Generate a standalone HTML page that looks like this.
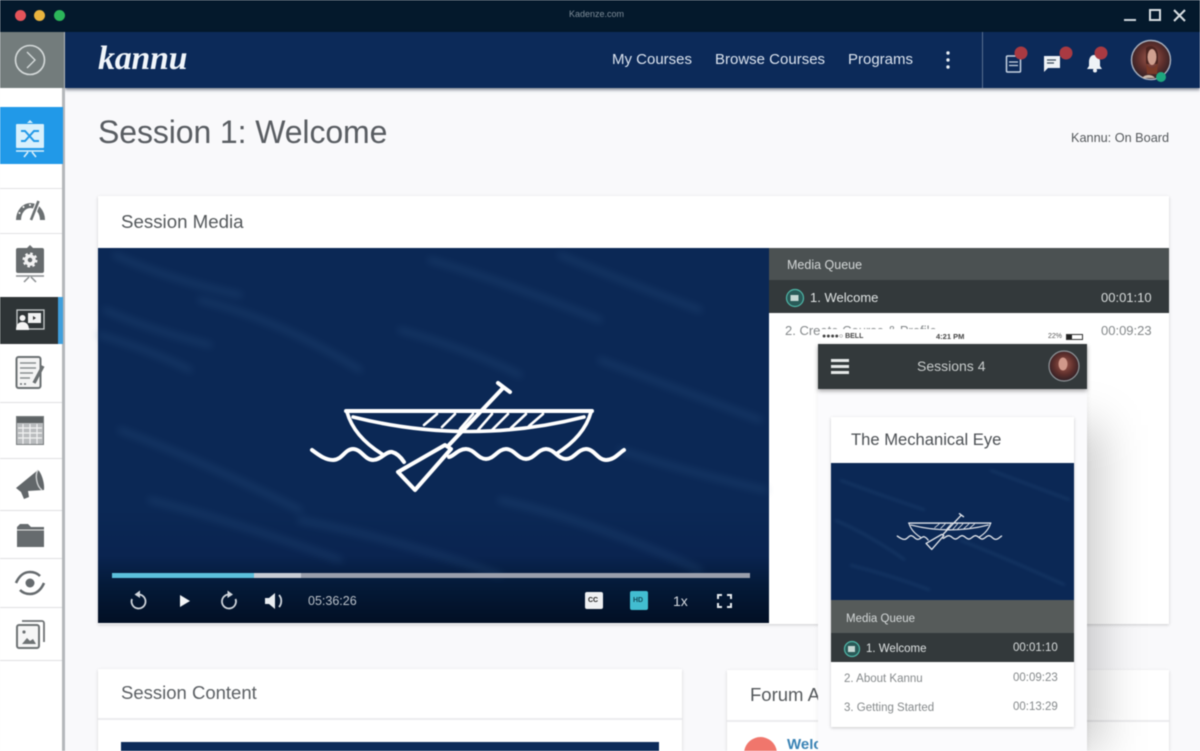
<!DOCTYPE html>
<html><head><meta charset="utf-8"><title>Kannu</title>
<style>
html,body{margin:0;padding:0;background:#f9f9fb;width:1200px;height:751px;overflow:hidden}
#p{position:relative;width:1200px;height:751px;overflow:hidden;background:#f9f9fb;font-family:"Liberation Sans",sans-serif;filter:blur(.6px)}
#p div{position:absolute;box-sizing:border-box}
#p div.t{position:absolute;white-space:nowrap;line-height:1}
svg{position:absolute;left:0;top:0}
</style></head><body>
<div id="p">
<div style="left:0;top:0;width:1200px;height:32px;background:#04192c"></div>
<div style="left:65px;top:32px;width:1135px;height:56px;background:#0c2a59;box-shadow:0 2px 3px rgba(40,50,70,.55)"></div>
<div style="left:982px;top:32px;width:1px;height:56px;background:#5a7090"></div>
<div class="t" style="left:569px;top:10px;font-size:9px;color:#7e8c98">Kadenze.com</div>
<div style="left:15px;top:10px;width:11px;height:11px;border-radius:50%;background:#e4545a"></div>
<div style="left:34px;top:10px;width:11px;height:11px;border-radius:50%;background:#e9b43e"></div>
<div style="left:54px;top:10px;width:11px;height:11px;border-radius:50%;background:#2cb65a"></div>

<div class="t" style="left:98px;top:42px;font-family:'Liberation Serif',serif;font-style:italic;font-weight:bold;font-size:34px;color:#f0f5fa;letter-spacing:-.3px">kannu</div>
<div class="t" style="left:612px;top:52px;font-size:15px;color:#dbe3ee">My Courses</div>
<div class="t" style="left:715px;top:52px;font-size:15px;color:#dbe3ee">Browse Courses</div>
<div class="t" style="left:848px;top:52px;font-size:15px;color:#dbe3ee">Programs</div>

<!-- sidebar -->
<div style="left:0;top:88px;width:62px;height:663px;background:#fff"></div>
<div style="left:62px;top:32px;width:3px;height:719px;background:#b4b7ba"></div>
<div style="left:0;top:32px;width:64px;height:56px;background:#737c7c"></div>
<div style="left:0;top:107px;width:63px;height:57px;background:#2199e8"></div>
<div style="left:0;top:188px;width:62px;height:1px;background:#e2e2e4"></div>
<div style="left:0;top:233px;width:62px;height:1px;background:#e2e2e4"></div>
<div style="left:0;top:297px;width:59px;height:47px;background:#2e3436"></div>
<div style="left:58px;top:297px;width:5px;height:47px;background:#3f9fdc"></div>
<div style="left:0;top:402px;width:62px;height:1px;background:#e0e0e2"></div>
<div style="left:0;top:458px;width:62px;height:1px;background:#e0e0e2"></div>
<div style="left:0;top:510px;width:62px;height:1px;background:#e0e0e2"></div>
<div style="left:0;top:558px;width:62px;height:1px;background:#e0e0e2"></div>
<div style="left:0;top:607px;width:62px;height:1px;background:#e0e0e2"></div>
<div style="left:0;top:660px;width:62px;height:1px;background:#e0e0e2"></div>

<!-- title -->
<div class="t" style="left:98px;top:116px;font-size:32px;color:#595d62;letter-spacing:-.1px">Session 1: Welcome</div>
<div class="t" style="left:1071px;top:132px;font-size:12.7px;color:#55595c">Kannu: On Board</div>

<!-- main card -->
<div style="left:98px;top:196px;width:1071px;height:428px;background:#fff;box-shadow:0 1px 3px rgba(0,0,0,.18)"></div>
<div class="t" style="left:121px;top:213px;font-size:18.7px;color:#55595c">Session Media</div>
<div style="left:98px;top:248px;width:671px;height:375px;background:linear-gradient(180deg,#0b2855 0,#0b2855 70%,#0a2450 82%,#041a38 90%,#020f24 100%)"></div>
<svg width="1200" height="751" style="filter:blur(4px);opacity:.32">
<g stroke="#35608f" stroke-width="5" fill="none" stroke-linecap="round">
<path d="M115 255Q170 280 240 295"/><path d="M105 310Q150 330 210 345"/><path d="M100 335Q150 350 190 370"/><path d="M200 300Q280 320 360 370"/><path d="M430 260Q500 280 600 320"/><path d="M560 255Q620 280 700 310"/><path d="M400 330Q470 350 520 375"/><path d="M600 360Q680 390 760 420"/><path d="M120 430Q200 460 300 510"/><path d="M150 500Q230 520 340 560"/><path d="M500 500Q590 520 700 570"/><path d="M620 450Q680 470 765 490"/><path d="M300 520Q400 540 500 575"/>
</g></svg>
<!-- queue -->
<div style="left:769px;top:248px;width:400px;height:32px;background:#4b5152"></div>
<div style="left:769px;top:280px;width:400px;height:33px;background:#33393b"></div>
<div class="t" style="left:787px;top:259px;font-size:12.5px;color:#d4d8d8">Media Queue</div>
<div class="t" style="left:810px;top:291px;font-size:13px;color:#dfe3e3">1. Welcome</div>
<div class="t" style="left:1101px;top:291px;font-size:13px;color:#d8dcdc">00:01:10</div>
<div class="t" style="left:785px;top:324px;font-size:13px;color:#85898b">2. Create Course &amp; Profile</div>
<div class="t" style="left:1101px;top:324px;font-size:13px;color:#85898b">00:09:23</div>

<!-- player -->
<div style="left:112px;top:573px;width:638px;height:5px;background:#9a9fac"></div>
<div style="left:112px;top:573px;width:189px;height:5px;background:#c8ccd4"></div>
<div style="left:112px;top:573px;width:142px;height:5px;background:#5cc0dc"></div>
<div class="t" style="left:308px;top:595px;font-size:12.5px;color:#b9c0c8">05:36:26</div>
<div style="left:585px;top:592px;width:18px;height:17px;background:#eef0f2;border-radius:2px"></div>
<div class="t" style="left:588px;top:597px;font-size:7px;font-weight:bold;color:#222">CC</div>
<div style="left:630px;top:591px;width:18px;height:19px;background:#42bdd0;border-radius:2px"></div>
<div class="t" style="left:633px;top:597px;font-size:7px;font-weight:bold;color:#14505e">HD</div>
<div class="t" style="left:673px;top:594px;font-size:14px;color:#d5dae0">1x</div>

<!-- bottom cards -->
<div style="left:98px;top:669px;width:584px;height:82px;background:#fff;box-shadow:0 1px 3px rgba(0,0,0,.16)"></div>
<div style="left:98px;top:718px;width:584px;height:2px;background:#ececee"></div>
<div class="t" style="left:121px;top:684px;font-size:18.5px;color:#5c6064">Session Content</div>
<div style="left:121px;top:742px;width:538px;height:9px;background:#0d2b59"></div>
<div style="left:727px;top:670px;width:442px;height:81px;background:#fff;box-shadow:0 1px 3px rgba(0,0,0,.16)"></div>
<div style="left:727px;top:720px;width:442px;height:2px;background:#ececee"></div>
<div class="t" style="left:750px;top:686px;font-size:18.5px;color:#55595c">Forum Activity</div>
<div class="t" style="left:787px;top:739px;height:12px;font-size:15px;line-height:12px;font-weight:bold;color:#3a83b5;overflow:hidden">Welcome</div>
<svg width="1200" height="751"><path d="M744.200 751A16.500 16.500 0 0 1 776.800 751Z" fill="#f0766c"/></svg>

<!-- phone -->
<svg width="1200" height="751" style="filter:blur(22px)"><rect x="1032" y="425" width="70" height="326" fill="#000" opacity=".2"/></svg>
<div style="left:818px;top:344px;width:269px;height:407px;background:#fbfbfd;box-shadow:0 0 6px rgba(0,0,0,.06)"></div>
<div style="left:821px;top:329px;width:266px;height:16px;background:#fff"></div>
<div class="t" style="left:822px;top:333px;font-size:7px;font-weight:bold;color:#444">●●●●○ BELL</div>
<div class="t" style="left:936px;top:333px;font-size:7.5px;color:#444;font-weight:bold">4:21 PM</div>
<div class="t" style="left:1048px;top:333px;font-size:7px;color:#555">22%</div>
<div style="left:1066px;top:334px;width:17px;height:6px;border:1px solid #333"></div>
<div style="left:1067px;top:335px;width:5px;height:4px;background:#222"></div>
<div style="left:818px;top:344px;width:269px;height:45px;background:#33393b;box-shadow:0 2px 4px rgba(0,0,0,.35)"></div>
<div style="left:831px;top:359px;width:18px;height:3px;background:#e6e8e8"></div>
<div style="left:831px;top:365px;width:18px;height:3px;background:#e6e8e8"></div>
<div style="left:831px;top:371px;width:18px;height:3px;background:#e6e8e8"></div>
<div class="t" style="left:917px;top:359px;font-size:14px;color:#c8cccc">Sessions 4</div>

<div style="left:831px;top:417px;width:243px;height:310px;background:#fff;box-shadow:0 1px 3px rgba(0,0,0,.2)"></div>
<div class="t" style="left:851px;top:432px;font-size:16.6px;color:#4c5054">The Mechanical Eye</div>
<div style="left:831px;top:463px;width:243px;height:137px;background:#0b2855"></div>
<svg width="1200" height="751" style="filter:blur(1.5px);opacity:.35">
<g stroke="#35608f" stroke-width="1.8" fill="none"><path d="M840 480Q880 495 925 510"/><path d="M990 470Q1030 485 1070 500"/><path d="M835 520Q870 535 905 560"/><path d="M960 540Q1010 560 1065 585"/><path d="M850 565Q890 575 930 590"/></g></svg>
<div style="left:831px;top:600px;width:243px;height:33px;background:#565b5a"></div>
<div style="left:831px;top:633px;width:243px;height:29px;background:#33393b"></div>
<div class="t" style="left:846px;top:614px;font-size:11.5px;color:#d4d8d8">Media Queue</div>
<div class="t" style="left:866px;top:644px;font-size:11.5px;color:#dfe3e3">1. Welcome</div>
<div class="t" style="left:1013px;top:643px;font-size:11.5px;color:#d8dcdc">00:01:10</div>
<div class="t" style="left:844px;top:674px;font-size:11.5px;color:#85898b">2. About Kannu</div>
<div class="t" style="left:1013px;top:673px;font-size:11.5px;color:#85898b">00:09:23</div>
<div class="t" style="left:844px;top:703px;font-size:11.5px;color:#85898b">3. Getting Started</div>
<div class="t" style="left:1013px;top:702px;font-size:11.5px;color:#85898b">00:13:29</div>

<svg width="1200" height="751" viewBox="0 0 1200 751">
<defs>
<g id="boat" fill="none" stroke="#fff" stroke-linecap="round" stroke-linejoin="round">
<path stroke-width="4" d="M346 411H592"/>
<path stroke-width="3.6" d="M347 412C352 430 366 444 382 454M591 412C586 430 572 444 556 454"/>
<path stroke-width="3.6" d="M353 417Q470 446 584 417"/>
<path stroke-width="2.6" d="M424 425L437 414M442 427L455 414M460 429L473 414M478 430L492 414M492 430L508 414M511 428L526 414M529 426L543 414"/>
<path stroke-width="4" d="M498 383L510 392M503 388L449 445"/>
<path stroke-width="4" d="M445 445L398 472L415 490L451 449Z"/>
<path stroke-width="4" d="M312 450C320 456 326 460 333 460C342 460 345 449 353 449C361 449 365 460 373 460C381 460 386 451 392 452C396 453 400 456 404 462"/>
<path stroke-width="4" d="M449 457C454 456 458 449 466 449C474 449 478 459 486 459C494 459 498 449 506 449C514 449 518 459 526 459C534 459 538 449 546 449C554 449 558 459 566 459C574 459 578 449 586 449C594 449 598 460 606 460C614 460 618 454 624 450"/>
</g>
<radialGradient id="av" cx=".5" cy=".45" r=".6"><stop offset="0" stop-color="#a35c50"/><stop offset=".55" stop-color="#5e2f2c"/><stop offset="1" stop-color="#241c24"/></radialGradient>
</defs>
<use href="#boat"/>
<g transform="translate(897,513) scale(.334) translate(-311,-381)" opacity=".88"><use href="#boat"/></g>

<!-- window controls -->
<path d="M1124 20H1136" stroke="#cfd6dc" stroke-width="2"/>
<rect x="1150" y="10" width="10" height="10" fill="none" stroke="#d8dee2" stroke-width="2"/>
<path d="M1174 10L1185 21M1185 10L1174 21" stroke="#d8dee2" stroke-width="2"/>

<!-- sidebar toggle -->
<circle cx="30" cy="60" r="14.5" fill="none" stroke="#d5dada" stroke-width="1.6"/>
<path d="M27 52L35 60L27 68" fill="none" stroke="#d5dada" stroke-width="1.4"/>

<!-- active icon -->
<path d="M30 120l3 3h-6z" fill="#d8f0fc"/>
<rect x="16" y="124" width="28" height="24" rx="1" fill="#d8f0fc"/>
<path d="M16 151H44M24 157L28 152M36 157L32 152" stroke="#d8f0fc" stroke-width="1.6" fill="none"/>
<path d="M21 131H25L34 141H39M21 141H25L34 131H39" stroke="#2199e8" stroke-width="2" fill="none"/>
<!-- gauge -->
<path fill="#6b7072" d="M16 220A14.500 17 0 0 1 45 220H40A9.500 12 0 0 0 21 220Z"/>
<circle cx="19.500" cy="213" r="1" fill="#fff"/><circle cx="23.500" cy="207" r="1" fill="#fff"/><circle cx="30" cy="205" r="1" fill="#fff"/>
<path d="M39 200L31 220" stroke="#fff" stroke-width="5"/>
<path d="M38.500 201L31 220" stroke="#6b7072" stroke-width="2.600"/>
<!-- presentation gear -->
<path d="M30 245l3 3h-6z" fill="#6b7072"/>
<rect x="16" y="248" width="28" height="25" rx="2" fill="#666b6d"/>
<path d="M16 276H44M24 282L29 277M36 282L31 277" stroke="#8a8e90" stroke-width="1.5" fill="none"/>
<circle cx="30" cy="260" r="4" fill="none" stroke="#f2f2f2" stroke-width="3.5"/>
<circle cx="30" cy="260" r="6.5" fill="none" stroke="#f2f2f2" stroke-width="2" stroke-dasharray="2.6 2.5"/>
<!-- dark item -->
<rect x="17" y="310" width="27" height="19" fill="none" stroke="#c8cccc" stroke-width="1.3"/>
<rect x="28" y="313" width="13" height="10" fill="#f0f2f2"/>
<path d="M33 316l3 2-3 2z" fill="#333"/>
<circle cx="22.500" cy="318" r="3" fill="#f4f4f4"/>
<path d="M16 330C16 324 19 322 22.500 322C26 322 29 324 29 330Z" fill="#f4f4f4"/>
<!-- doc -->
<rect x="16.500" y="357" width="24" height="31" rx="2" fill="#f4f4f4" stroke="#6b7072" stroke-width="2"/>
<path d="M20 363H36M20 368H36M20 373H33M20 378H30" stroke="#8b8f91" stroke-width="1.6"/>
<path d="M43 366L34 383" stroke="#6b7072" stroke-width="3.4"/>
<path d="M20 384H28" stroke="#6b7072" stroke-width="1.6" stroke-dasharray="2 2"/>
<!-- table -->
<rect x="16" y="416" width="28" height="29" fill="#b9bcbe"/>
<rect x="16" y="416" width="28" height="7" fill="#5f6466"/>
<path d="M18 428H42M18 433H42M18 438H42M23 424V444M30 424V444M37 424V444" stroke="#f2f2f2" stroke-width="1.2"/>
<rect x="16.500" y="416.500" width="27" height="28" fill="none" stroke="#777b7d"/>
<!-- megaphone -->
<path d="M16 488L38 470C41 472 45 483 44 490L28 491L29 497 24 499 21 492Z" fill="#62676a"/>
<path d="M38 470C35 474 36 486 42 490" stroke="#d0d2d3" stroke-width="1.4" fill="none"/>
<!-- folder -->
<path d="M20 524H28L31 527H44V547H17V527Z" fill="#666b6e"/>
<path d="M17 530H44" stroke="#e6e6e6" stroke-width="1"/>
<!-- eye -->
<circle cx="30" cy="583" r="4.500" fill="#666b6e"/>
<path d="M16 583C19 576 24 572 30 572C35 572 38 574 40 576M44 583C41 590 36 594 30 594C25 594 22 592 20 590" fill="none" stroke="#666b6e" stroke-width="2.6"/>
<!-- images -->
<rect x="17" y="625" width="22" height="23" rx="2" fill="#f6f6f6" stroke="#6e7274" stroke-width="2"/>
<path d="M22 621H42C43 621 44 622 44 623V642" fill="none" stroke="#6e7274" stroke-width="1.8"/>
<circle cx="24" cy="632" r="1.600" fill="#6e7274"/>
<path d="M22 644L27 638 30 641 33 639 36 644Z" fill="#6e7274"/>

<!-- header icons -->
<circle cx="948" cy="53" r="1.700" fill="#e6ecf2"/><circle cx="948" cy="60" r="1.700" fill="#e6ecf2"/><circle cx="948" cy="67" r="1.700" fill="#e6ecf2"/>
<rect x="1006.500" y="56" width="14" height="16" rx="1" fill="#0c2a59" stroke="#c8d4e2" stroke-width="1.500"/>
<path d="M1009 62H1018M1009 65.500H1018" stroke="#c8d4e2" stroke-width="1.300"/>
<path d="M1044 56H1060V68H1048L1044 72Z" fill="#eef2f6"/>
<path d="M1047 60H1056M1047 63H1054" stroke="#3a4a5a" stroke-width="1.200"/>
<path d="M1094 55C1098 55 1100 58 1100 62V66L1102 69H1087L1089 66V62C1089 58 1091 55 1094 55Z" fill="#eef2f6"/>
<circle cx="1095" cy="70.500" r="2" fill="#eef2f6"/>
<circle cx="1021" cy="53" r="6.500" fill="#a93a42"/>
<circle cx="1066" cy="53" r="6.500" fill="#a93a42"/>
<circle cx="1101" cy="53" r="6.500" fill="#a93a42"/>
<circle cx="1151" cy="60" r="19.500" fill="url(#av)" stroke="#aab2c0" stroke-width="1.400"/>
<path d="M1146 48C1150 44 1158 46 1158 56V64H1146Z" fill="#4a2420"/>
<ellipse cx="1152" cy="57" rx="4.500" ry="8" fill="#d0a090"/>
<path d="M1146 62C1148 70 1156 70 1158 62L1157 74H1147Z" fill="#7a3a28"/>
<path d="M1142 78C1145 74 1152 74 1155 78Z" fill="#ccb8a8"/>
<circle cx="1161" cy="77" r="5" fill="#1ea77e"/>

<!-- player icons -->
<g fill="none" stroke="#cfd5dc" stroke-width="1.800">
<path d="M138.500 594.500A7 7 0 1 1 132 599"/>
<path d="M229 594.500A7 7 0 1 0 235.500 599"/>
<path d="M279 595C282 598 282 604 279 607"/>
</g>
<path d="M140 590.500L134.500 594.500 140 598Z" fill="#cfd5dc"/>
<path d="M227.500 590.500L233 594.500 227.500 598Z" fill="#cfd5dc"/>
<path d="M180 595L190 601 180 607Z" fill="#f2f4f6"/>
<path d="M265 598H269L275 593V609L269 604H265Z" fill="#e8ecf0"/>
<path d="M718 599V595H722M727 595H731V599M718 603V607H722M727 607H731V603" fill="none" stroke="#e6eaee" stroke-width="2"/>

<!-- queue play badges -->
<circle cx="795" cy="298" r="8.500" fill="#2a5a58" stroke="#4fb7a8" stroke-width="1.2"/>
<rect x="790.500" y="295" width="8" height="6" fill="#c6d8d4"/>
<circle cx="852" cy="649" r="7.500" fill="#2a5a58" stroke="#4fb7a8" stroke-width="1.200"/>
<rect x="848" y="646" width="7" height="6" fill="#c6d8d4"/>

<!-- phone avatar -->
<circle cx="1064" cy="366" r="15" fill="url(#av)" stroke="#8e9498" stroke-width="1.2"/>
<ellipse cx="1063" cy="364" rx="4.500" ry="6.500" fill="#d0988a"/>
</svg>
</div>
</body></html>
